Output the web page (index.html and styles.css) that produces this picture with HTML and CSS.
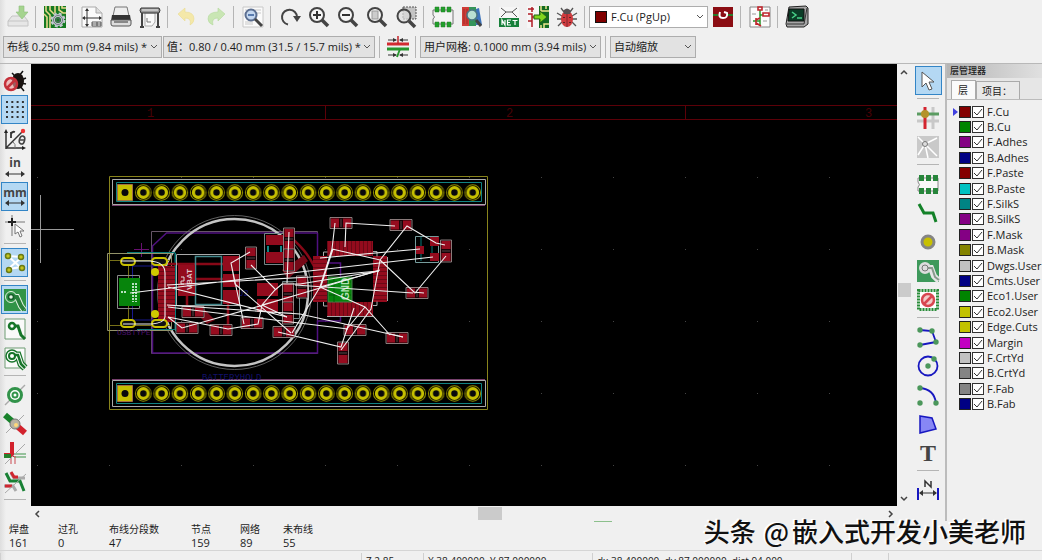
FILE: index.html
```html
<!DOCTYPE html>
<html lang="zh-CN">
<head>
<meta charset="utf-8">
<title>PCB</title>
<link rel="stylesheet" href="styles.css">
</head>
<body>
<header class="head">
  <div class="bar">
    <button class="tool" aria-label="保存"><svg viewBox="0 0 22 22"><path d="M1 15l4-5h12l4 5v5H1z" fill="#e6e6e6" stroke="#c4c4c4"/><path d="M1 15h20" stroke="#c4c4c4"/><path d="M12 0h5v6h4l-6 7-6-7h3z" fill="#a5d48f" stroke="#8dbd7c" stroke-width=".6"/></svg></button>
    <i class="sep"></i>
    <button class="tool" aria-label="电路板设置"><svg viewBox="0 0 22 22"><path d="M0 0h22v22H0z" fill="#157a22"/><path d="M2 0v5l4 4v13M6 0v4l4 4M11 0v7M15 0v4l4 3h3M0 8l3 3v11M18 0v2h4" fill="none" stroke="#e5d889" stroke-width="1.6"/><circle cx="14" cy="14" r="4.500" fill="none" stroke="#c3c9d0" stroke-width="3"/><circle cx="14" cy="14" r="6.500" fill="none" stroke="#c3c9d0" stroke-width="2" stroke-dasharray="3 2.100"/><circle cx="14" cy="14" r="4.500" fill="none" stroke="#59616b" stroke-width=".8"/><circle cx="14" cy="14" r="2" fill="#157a22" stroke="#59616b"/></svg></button>
    <i class="sep"></i>
    <button class="tool" aria-label="页面设置"><svg viewBox="0 0 22 22"><path d="M1 1h14l6 6v14H1z" fill="#fafafa" stroke="#aaa"/><path d="M15 1v6h6" fill="#ddd" stroke="#aaa"/><path d="M6 3v17M2 12h18" stroke="#333"/><path d="M4 5l2-3 2 3zM4 18l2 3 2-3zM4 10l-3 2 3 2zM18 10l3 2-3 2z" fill="#333"/><path d="M11 16h9v4h-9zM11 18h9M16 16v4" fill="none" stroke="#333" stroke-width=".8"/></svg></button>
    <button class="tool" aria-label="打印"><svg viewBox="0 0 22 22"><path d="M5 1h12l2 9H3z" fill="#eee" stroke="#777"/><path d="M2 9h18l1 6H1z" fill="#333"/><path d="M1 14h20v4q0 2-2 2H3q-2 0-2-2z" fill="#ddd" stroke="#555"/><path d="M4 16h14" stroke="#888" stroke-width="2"/></svg></button>
    <button class="tool" aria-label="绘图"><svg viewBox="0 0 22 22"><path d="M6 7h10v9l-3 4H6z" fill="#fafafa" stroke="#aaa"/><path d="M2 2h18q2 2 0 5H2q-2-3 0-5z" fill="#999" stroke="#333"/><path d="M3 4h16" stroke="#eee"/><path d="M3 7v14M19 7v14M1 21h4M17 21h4" stroke="#444" stroke-width="2"/><path d="M8 12v4h4" fill="none" stroke="#777"/></svg></button>
    <i class="sep"></i>
    <button class="tool" aria-label="撤销"><svg viewBox="0 0 22 22"><path d="M2 8l7-6v4q9 0 9 7 0 4-4 6 2-7-5-7v3z" fill="#f4e8a9" stroke="#eadb92" stroke-width=".6"/></svg></button>
    <button class="tool" aria-label="重做"><svg viewBox="0 0 22 22"><path d="M20 8l-7-6v4Q3 6 3 13q0 4 5 6-2-7 5-7v3z" fill="#c9e6b4" stroke="#b4d99c" stroke-width=".6"/></svg></button>
    <i class="sep"></i>
    <button class="tool" aria-label="查找"><svg viewBox="0 0 22 22"><path d="M1 1h20v20H1z" fill="#fafafa" stroke="#c8c8c8"/><path d="M3 4h16M3 7h16M3 16h8M3 18h8" stroke="#c8c8c8"/><circle cx="9" cy="9" r="5.500" fill="#c4d7ef" stroke="#5c6f91" stroke-width="2"/><path d="M6 9h6" stroke="#587aae" stroke-width="2"/><path d="M13 13l7 7" stroke="#444" stroke-width="3"/></svg></button>
    <i class="sep"></i>
    <button class="tool" aria-label="刷新"><svg viewBox="0 0 22 22"><path d="M9 18.500A7.500 7.500 0 1 1 18 11" fill="none" stroke="#444" stroke-width="2"/><path d="M14 10h8l-4 6z" fill="#444"/></svg></button>
    <button class="tool" aria-label="放大"><svg viewBox="0 0 22 22"><circle cx="9" cy="9" r="7" fill="#f6f6f6" stroke="#444" stroke-width="2"/><path d="M14 14l6 6" stroke="#444" stroke-width="3.500"/><path d="M5 9h8M9 5v8" stroke="#333" stroke-width="2"/></svg></button>
    <button class="tool" aria-label="缩小"><svg viewBox="0 0 22 22"><circle cx="9" cy="9" r="7" fill="#f6f6f6" stroke="#444" stroke-width="2"/><path d="M14 14l6 6" stroke="#444" stroke-width="3.500"/><path d="M5 9h8" stroke="#333" stroke-width="2"/></svg></button>
    <button class="tool" aria-label="适合窗口"><svg viewBox="0 0 22 22"><circle cx="9" cy="9" r="7" fill="#f6f6f6" stroke="#444" stroke-width="2"/><path d="M14 14l6 6" stroke="#444" stroke-width="3.500"/><path d="M6 5h6v8H6z" fill="#ccc" stroke="#999"/></svg></button>
    <button class="tool" aria-label="缩放选区"><svg viewBox="0 0 22 22"><path d="M8 1h13v12H8z" fill="#c4c4c4" stroke="#555" stroke-dasharray="2 1"/><circle cx="9" cy="10" r="6.500" fill="#ddd" fill-opacity=".7" stroke="#444" stroke-width="2"/><path d="M14 15l6 6" stroke="#444" stroke-width="3.500"/></svg></button>
    <i class="sep"></i>
    <button class="tool" aria-label="封装编辑器"><svg viewBox="0 0 22 22"><path d="M1 4h20v14H1v-5q3-2 0-4z" fill="#f4f4f4" stroke="#777"/><path d="M3 1h4v5H3zM9 1h4v5H9zM15 1h4v5h-4zM3 16h4v5H3zM9 16h4v5H9zM15 16h4v5h-4z" fill="#20a02a" stroke="#247a2b" stroke-width=".5"/></svg></button>
    <button class="tool" aria-label="封装浏览"><svg viewBox="0 0 22 22"><path d="M1 1h7v19H1z" fill="#cf3d37"/><path d="M3 3v15M6 3v15" stroke="#a52a28"/><path d="M8 1h7v19H8z" fill="#34945a"/><path d="M15 3l3-1 3 17h-6z" fill="#3d74bb"/><circle cx="11" cy="9" r="5" fill="#b9e0d2" stroke="#4c7683" stroke-width="1.500"/><path d="M15 14l5 6" stroke="#444" stroke-width="3"/></svg></button>
    <i class="sep"></i>
    <button class="tool" aria-label="网络表"><svg viewBox="0 0 22 22"><path d="M1 1h20v11H1z" fill="#f6f6f6"/><path d="M3 2l5 4h6l5-4M3 11l5-5M19 11l-5-5" fill="none" stroke="#555"/><path d="M1 12h20v9H1z" fill="#17803a"/><path d="M4 19v-5l3 5v-5M13 14H9.500v5H13M9.500 16.500H12M14.500 14.500h5M17 14.500V19" fill="none" stroke="#fff" stroke-width="1.200"/></svg></button>
    <button class="tool" aria-label="从原理图更新"><svg viewBox="0 0 22 22"><path d="M0 0h22v22H0z" fill="#f6f6f6"/><path d="M12 0h10v22H12z" fill="#136b22"/><path d="M14 0v5h8M17 22v-4h5M19 0v3M14 22v-3" fill="none" stroke="#eee78f" stroke-width="1.500"/><path d="M5 1v5M1 8h4v7H1M5 15v6M1 3h6M5 11h5" fill="none" stroke="#b01c26" stroke-width="1.500"/><path d="M7 9h6V5l7 6-7 6v-4H7z" fill="#80d51f" stroke="#246217"/></svg></button>
    <button class="tool" aria-label="设计规则检查"><svg viewBox="0 0 22 22"><path d="M5 2l3 4M17 2l-3 4M1 7l5 3M21 7l-5 3M1 13h5M21 13h-5M2 20l4-4M20 20l-4-4" stroke="#555" stroke-width="1.300"/><ellipse cx="11" cy="13" rx="6" ry="8" fill="#cf3b3e"/><path d="M7 5q4-5 8 0l-1 3H8z" fill="#565052"/><path d="M11 8v13" stroke="#84272e"/><path d="M8 11v1M14 11v1M8 16v1M14 16v1" stroke="#5e2528" stroke-width="2"/></svg></button>
    <i class="sep"></i>
    <span class="layerpick"><i class="chip"></i><select class="combo white" aria-label="当前层"><option>F.Cu (PgUp)</option></select></span>
    <button class="tool" aria-label="层对"><svg viewBox="0 0 22 22"><path d="M1 1h20v20H1z" fill="#8b0d13"/><path d="M1 9h20" stroke="#287929" stroke-width="2"/><circle cx="11" cy="9" r="5" fill="#8b0d13"/><path d="M8 6q-2 6 3 6t4-5l-3-1" fill="none" stroke="#fff" stroke-width="2"/></svg></button>
    <i class="sep"></i>
    <button class="tool" aria-label="原理图"><svg viewBox="0 0 22 22"><path d="M1 1h20v20H1z" fill="#fbfbfb" stroke="#888"/><path d="M11 4v15M11 9h3M4 15h7" stroke="#27942a" stroke-width="1.500"/><path d="M9 1h4v3H9zM14 7h6v3h-6zM7 12v7M7 14l4-2M7 17l5 3" fill="none" stroke="#c0252c" stroke-width="1.600"/><path d="M3 8h4M14 15h4M16 4h3" stroke="#999"/></svg></button>
    <i class="sep"></i>
    <button class="tool" aria-label="脚本控制台"><svg viewBox="0 0 22 22"><path d="M3 1l17-1 2 2v16l-4 3H1l-1-3z" fill="#a6a6a6" stroke="#222"/><path d="M3 3h15v12H2z" fill="#0b3c27" stroke="#111"/><path d="M6 6l4 3-4 3M11 12h5" fill="none" stroke="#47d087" stroke-width="1.500"/><path d="M1 18h17l3-16" fill="none" stroke="#333"/></svg></button>
  </div>
  <div class="bar second">
    <select class="combo w1" aria-label="布线宽度"><option>布线 0.250 mm (9.84 mils) *</option></select>
    <select class="combo w2" aria-label="过孔尺寸"><option>值：0.80 / 0.40 mm (31.5 / 15.7 mils) *</option></select>
    <i class="sep"></i>
    <button class="tool" aria-label="自动布线宽度"><svg viewBox="0 0 22 22"><path d="M0 8h22" stroke="#d22b31" stroke-width="3"/><path d="M0 13h22" stroke="#27962e" stroke-width="3"/><path d="M11 0v8" stroke="#c3252b" stroke-width="1.500"/><path d="M13 13l-3 8" stroke="#27962e" stroke-width="2"/><path d="M1 4h8M13 4h8M1 19h8M13 19h8" stroke="#333"/><path d="M6 2l4 2-4 2zM16 2l-4 2 4 2zM6 17l4 2-4 2zM16 17l-4 2 4 2z" fill="#333"/></svg></button>
    <i class="sep"></i>
    <select class="combo w3" aria-label="网格"><option>用户网格: 0.1000 mm (3.94 mils)</option></select>
    <i class="sep"></i>
    <select class="combo w4" aria-label="缩放"><option>自动缩放</option></select>
  </div>
</header>

<main class="work">
  <nav class="side">
    <button class="tool" aria-label="关闭检查"><svg viewBox="0 0 22 22"><path d="M8 3l4 4M19 1l-4 5M7 9h4M22 8l-5 2M22 14l-5-1M20 21l-4-5" stroke="#111" stroke-width="1.500"/><ellipse cx="14" cy="11" rx="6" ry="8" fill="#17110f"/><circle cx="7" cy="14" r="6" fill="#e99" fill-opacity=".6" stroke="#c5303a" stroke-width="2.500"/><path d="M3 18l8-8" stroke="#c5303a" stroke-width="2.500"/></svg></button>
    <button class="tool on" aria-label="显示网格"><svg viewBox="0 0 22 22"><path d="M2 3h18M2 8h18M2 13h18M2 18h18" stroke="#333" stroke-width="2" stroke-dasharray="2 3.300"/></svg></button>
    <button class="tool" aria-label="极坐标"><svg viewBox="0 0 22 22"><path d="M2 21V3M2 20h18M2 20L18 4" fill="none" stroke="#333" stroke-width="1.500"/><path d="M0 5l2-4 2 4zM18 18l4 2-4 2z" fill="#222"/><circle cx="19" cy="3" r="2.200" fill="#e33"/><path d="M7 10V4M7 6q1-3 4-2" fill="none" stroke="#333" stroke-width="1.800"/><path d="M9 14q3 2 2 6" fill="none" stroke="#777"/><ellipse cx="18" cy="12" rx="2.600" ry="4" fill="none" stroke="#444" stroke-width="1.600" transform="rotate(15 18 12)"/><path d="M16 12h4" stroke="#444" stroke-width="1.500"/></svg></button>
    <button class="tool" aria-label="英寸"><svg viewBox="0 0 22 22"><text x="11" y="10" class="unit">in</text><path d="M3 17h16" stroke="#333"/><path d="M5 14l-4 3 4 3zM17 14l4 3-4 3z" fill="#333"/></svg></button>
    <button class="tool on" aria-label="毫米"><svg viewBox="0 0 22 22"><text x="11" y="11" class="unit">mm</text><path d="M3 17h16" stroke="#333"/><path d="M5 14l-4 3 4 3zM17 14l4 3-4 3z" fill="#333"/></svg></button>
    <button class="tool" aria-label="光标形状"><svg viewBox="0 0 22 22"><path d="M1 7h20M8 0v21" stroke="#777"/><path d="M4 7h8M8 3v8" stroke="#222" stroke-width="2"/><path d="M11 9v10l3-2 2 5 2-1-2-5h4z" fill="#fff" stroke="#777"/></svg></button>
    <i class="sep"></i>
    <button class="tool on" aria-label="显示飞线"><svg viewBox="0 0 22 22"><path d="M4 4l14 1-14 12 14-2M4 4l12 11" fill="none" stroke="#fff" stroke-width="2"/><g fill="#c4c51f" stroke="#697a16" stroke-width="1.500"><circle cx="4" cy="4" r="2.500"/><circle cx="17" cy="5" r="2.500"/><circle cx="5" cy="18" r="2.500"/><circle cx="18" cy="16" r="2.500"/></g></svg></button>
    <i class="sep"></i>
    <button class="tool on" aria-label="填充区域"><svg viewBox="0 0 22 22"><path d="M0 0h22v22H0z" fill="#319447"/><path d="M8 8h5l4 9 3 4" fill="none" stroke="#e6f3e5" stroke-width="6"/><circle cx="7" cy="8" r="5.500" fill="#319447" stroke="#e6f3e5"/><path d="M8 8h5l4 9 3 4" fill="none" stroke="#287f3b" stroke-width="4"/><circle cx="7" cy="8" r="2.500" fill="#e6f3e5" stroke="#17602a" stroke-width="1.500"/></svg></button>
    <button class="tool" aria-label="区域轮廓"><svg viewBox="0 0 22 22"><path d="M1 1h20v20H1z" fill="#fafafa" stroke="#6d9b73"/><path d="M9 8h5l3 9 4 4" fill="none" stroke="#17752a" stroke-width="3"/><circle cx="8" cy="8" r="3" fill="#fff" stroke="#17752a" stroke-width="2.500"/></svg></button>
    <button class="tool" aria-label="隐藏填充"><svg viewBox="0 0 22 22"><path d="M1 1h20v20H1z" fill="#fafafa" stroke="#6d9b73"/><path d="M8 8h6l3 9 4 4" fill="none" stroke="#17752a" stroke-width="7"/><circle cx="8" cy="9" r="6" fill="#fff" stroke="#17752a" stroke-width="1.500"/><path d="M8 8h6l3 9 4 4" fill="none" stroke="#fff" stroke-width="4.500"/><path d="M9 8h5l3 9 4 4" fill="none" stroke="#17752a" stroke-width="2.500"/><circle cx="8" cy="9" r="3" fill="#fff" stroke="#17752a" stroke-width="2"/></svg></button>
    <i class="sep"></i>
    <button class="tool" aria-label="焊盘草图"><svg viewBox="0 0 22 22"><path d="M1 21L21 1" stroke="#aaa" stroke-width="1.500"/><circle cx="11" cy="11" r="6.500" fill="#fff" stroke="#32934a" stroke-width="3"/><circle cx="11" cy="11" r="2.500" fill="none" stroke="#32934a" stroke-width="2"/></svg></button>
    <button class="tool" aria-label="过孔草图"><svg viewBox="0 0 22 22"><path d="M2 20L20 2" stroke="#aaa"/><path d="M1 2l8 7" stroke="#18822b" stroke-width="6"/><path d="M13 13l8 7" stroke="#d2222d" stroke-width="6"/><circle cx="11" cy="11" r="5" fill="#b9b3a2" stroke="#777"/><circle cx="12" cy="12" r="2" fill="#ffd978"/></svg></button>
    <button class="tool" aria-label="布线草图"><svg viewBox="0 0 22 22"><path d="M8 0v12M0 13h10" stroke="#d2222d" stroke-width="4"/><path d="M10 12h12M10 15h12" stroke="#3d9348"/><path d="M7 14v8M11 14v8" stroke="#ca4a50"/><path d="M0 14h7" stroke="#27822e" stroke-width="4"/><path d="M1 22L21 2" stroke="#aaa"/></svg></button>
    <button class="tool" aria-label="高对比度"><svg viewBox="0 0 22 22"><path d="M7 2l3 5h11M0 15h9l3 5" fill="none" stroke="#aaa" stroke-width="3"/><path d="M7 1l3 5h4M1 15h7" fill="none" stroke="#d02730" stroke-width="3"/><path d="M2 2l4 8h10l4 10" fill="none" stroke="#198135" stroke-width="3"/><path d="M1 22L22 3" stroke="#aaa"/></svg></button>
    <i class="sep"></i>
  </nav>

  <section class="view" aria-label="电路板">
    <svg class="board" width="100%" height="100%">
      <defs>
        <pattern id="dots" x="37" y="33" width="72" height="72" patternUnits="userSpaceOnUse"><path d="M0 0h1v1H0z" fill="#444"/></pattern>
        <pattern id="pins" x="134.200" y="0" width="18.300" height="201" patternUnits="userSpaceOnUse">
          <g id="pin"><circle cx="9.150" cy="192.500" r="7.800" fill="none" stroke="#969200"/><circle cx="9.150" cy="192.500" r="4.800" fill="#08080c" stroke="#c5bf00" stroke-width="3.200"/></g>
        </pattern>
        <pattern id="lead" width="4" height="20" patternUnits="userSpaceOnUse"><path d="M0 0h3v20H0z" fill="#930b1d"/><path d="M3 0h1v20H3z" fill="#6a0815"/></pattern>
        <pattern id="leadv" width="20" height="4" patternUnits="userSpaceOnUse"><path d="M0 0h20v3H0z" fill="#930b1d"/><path d="M0 3h20v1H0z" fill="#6a0815"/></pattern>
        <g id="h"><path d="M-11-5.500h22v11h-22z" fill="#190307" stroke="#a99" stroke-width=".8"/><path d="M-10-4.500h8v9h-8zM2-4.500h8v9H2z" fill="#960c1f"/><path d="M0-4v8" stroke="#777" stroke-width=".6"/></g>
        <g id="v"><path d="M-5.500-11h11v22h-11z" fill="#190307" stroke="#a99" stroke-width=".8"/><path d="M-4.500-10h9v8h-9zM-4.500 2h9v8h-9z" fill="#960c1f"/><path d="M-4 0h8" stroke="#777" stroke-width=".6"/></g>
      </defs>
      <g transform="translate(-31 -64)">
        <path d="M31 64h2000v1500H31z" fill="url(#dots)"/>
        <path d="M31 105.500h2000M31 119.500h2000M325.500 105v14M685.500 105v14" fill="none" stroke="#5c0008"/>
        <g class="frame-no"><text x="147" y="117">1</text><text x="506" y="117">2</text><text x="865" y="117">3</text></g>
        <path d="M40.500 195v68M31 229.500h43" stroke="#999"/>

        <g fill="none">
          <path d="M109.500 176.500h378v233h-378z" stroke="#89841c"/>
          <path d="M112.500 179.500h373v25h-373zM112.500 380.500h373v26h-373z" stroke="#aaa"/>
          <path d="M112 205.500h373M112 379.500h373" stroke="#77406d"/>
          <path d="M116.500 182.500h365v19h-365zM116.500 383.500h365v20h-365z" stroke="#118383"/>
        </g>
        <path d="M134.200 183h347.700v19H134.200z" fill="url(#pins)"/>
        <path d="M134.200 183h347.700v19H134.200z" fill="url(#pins)" transform="translate(0 201)"/>
        <g fill="#c5bf00" stroke="#a16f45"><path d="M117.500 184.500h15v16h-15zM117.500 385.500h15v16h-15z"/></g>
        <circle cx="125" cy="192.500" r="3.500" fill="#08080c"/><circle cx="125" cy="393.500" r="3.500" fill="#08080c"/>

        <g fill="none">
          <path d="M151.500 231.500h166v122h-166z" stroke="#665567"/>
          <path d="M317.500 233v30h23v58h-23v32h-165V246l14-13h151" stroke="#501080" stroke-width="1.500"/>
          <path d="M134 249.500h15M141.500 243v14" stroke="#681070"/>
          <circle cx="234.500" cy="292.500" r="77" stroke="#777" stroke-width=".8"/>
          <circle cx="234.500" cy="292.500" r="73.500" stroke="#c4c4c4" stroke-width="2.500"/>
          <path d="M107.500 253.500h64v77h-64z" stroke="#929269"/>
          <path d="M127 252.500h48v77h-38M175.500 253v78" stroke="#087b7b"/>
          <path d="M110 260.500h60M110 325.500h60M128.500 261v64" stroke="#777018"/>
          <path d="M132.500 266v54h29v-54z" stroke="#18188c"/>
          <path d="M117.500 275.500h22v33h-22z" stroke="#888"/>
        </g>
        <path d="M119 278h21v28h-21z" fill="#07840c"/>
        <path d="M121 292h6M133 283v19M136 283v19" stroke="#b8e1c0" stroke-width="2" stroke-dasharray="2 1"/>
        <path d="M158 266h17v56h-17z" fill="url(#leadv)"/>
        <g fill="#111" stroke="#c9c000" stroke-width="2"><rect x="121" y="258" width="14" height="7" rx="3.500"/><rect x="152" y="258" width="15" height="7" rx="3.500"/><rect x="121" y="320" width="14" height="7" rx="3.500"/><rect x="152" y="320" width="15" height="7" rx="3.500"/></g>
        <g fill="#d0c900"><circle cx="155" cy="272" r="4"/><circle cx="155" cy="314" r="4"/></g>
        <text x="117" y="335" class="silk purple">USBTYPE</text>
        <text x="202" y="380" class="silk">BATTERYHOLD</text>
        <text x="238" y="296" class="silk">U2</text>

        <g fill="none">
          <path d="M168 264h56M194 279h30M187 294v16M228 303v22M289 236q25 20 30 45" stroke="#870817" stroke-width="2.500"/>
          <path d="M176.500 254.500h63v51h-63z" stroke="#a9a9a9"/>
          <path d="M195.500 256.500h26v48h-26z" stroke="#43888c" stroke-width="1.500"/>
        </g>
        <g fill="#930b1d"><path d="M178 265h17v31h-17zM223 256h16v15h-16zM223 274h16v13h-16zM223 290h16v14h-16zM266 235h17v10h-17zM266 252h17v11h-17zM257 283h21v13h-21zM257 299h21v13h-21z"/><path d="M201 306l14 14-8 4-12-12zM282 270l22-15 4 6-20 18z" fill="#760917"/></g>
        <text class="label" transform="translate(192 290) rotate(-90)">VBAT</text>
        <path d="M181 277h3v4h-3v3h3" fill="none" stroke="#ddd"/>
        <path d="M264.500 233.500h20v31h-20zM282.500 281.500h17v37h-17z" fill="none" stroke="#748789"/>
        <path d="M268 246v6M281 246v6" stroke="#118787" stroke-width="2"/>
        <use href="#v" x="289" y="239"/><use href="#v" x="289" y="260"/><use href="#v" x="251" y="258"/><use href="#v" x="288" y="294"/><use href="#v" x="288" y="313"/><use href="#v" x="302" y="287"/>
        <use href="#h" x="193" y="312"/><use href="#h" x="187" y="328"/><use href="#h" x="221" y="330"/><use href="#h" x="252" y="323"/><use href="#h" x="284" y="332"/><use href="#h" x="341" y="223"/><use href="#h" x="401" y="225"/><use href="#h" x="417" y="293"/><use href="#h" x="355" y="330"/><use href="#h" x="397" y="338"/>
        <use href="#v" x="446" y="251"/><use href="#v" x="343" y="353"/>
        <path d="M415.500 236.500h23v26h-23z" fill="none" stroke="#769c9c"/><path d="M421 237v24M432 237v24" stroke="#087878"/>
        <path d="M416 246h8v8h-8zM430 237h9v9h-9zM430 253h9v8h-9z" fill="#930b1d"/>
        <path d="M327 241h46v15h-46zM327 302h46v14h-46z" fill="url(#lead)"/>
        <path d="M313 256h14v46h-14zM373 256h14v46h-14z" fill="url(#leadv)"/>
        <path d="M323.500 256v-4h4M373 251.500h4v5M323.500 302v4h4M373 305.500h4v-4M387.500 257v44M327 316.500h46" fill="none" stroke="#aaa"/>
        <path d="M328 277h24v25h-24z" fill="#07840c" stroke="#477c4a"/>
        <path d="M329 282h22M329 295h22M334 278v24" stroke="#055c09"/>
        <text class="label gnd" transform="translate(349 300) rotate(-90)">GND</text>

        <g class="rats">
          <path d="M130 293L300 272 433 257M167 285L310 277 379 271M320 258L420 249M168 287L287 317M295 285L413 293M167 305L300 314 403 337M168 307L348 329"/>
          <path d="M168 317L182 328 260 306 380 270M168 317L228 329 258 324 262 305 275 290 282 284H300L379 271M250 252L231 263 244 324M231 263L235 284 291 333M251 265L275 289M289 232L287 283M278 332L341 347 354 308M262 305L287 317M262 305L300 294"/>
          <path d="M292 333L320 287 332 249 335 223M345 247L346 223 395 226M332 249L380 260 407 226 436 243 445 245M380 260L415 293 446 256M380 260L371 309 341 350M320 287L365 307 390 335M320 287L378 271M333 249L321 286M365 307L346 330M413 292L424 293M390 334L403 337"/>
          <path d="M121 261h29q15 1 15 12v44q-1 6-13 7h-29"/>
        </g>
      </g>
    </svg>
  </section>

  <div class="vscroll"><svg class="arrow" viewBox="0 0 8 8"><path d="M1 6l3-3 3 3"/></svg><i class="thumb"></i><svg class="arrow" viewBox="0 0 8 8"><path d="M1 2l3 3 3-3"/></svg></div>
  <div class="hscroll"><svg class="arrow" viewBox="0 0 8 8"><path d="M5 1L2 4l3 3"/></svg><i class="thumb"></i><svg class="arrow" viewBox="0 0 8 8"><path d="M3 1l3 3-3 3"/></svg></div>

  <nav class="side right">
    <button class="tool on" aria-label="选择"><svg viewBox="0 0 22 22"><path d="M5 2v15l4-4 3 7 3-1-3-7h5z" fill="#fff" stroke="#555"/></svg></button>
    <i class="sep"></i>
    <button class="tool" aria-label="高亮网络"><svg viewBox="0 0 22 22"><path d="M0 14h22M16 0v22" stroke="#c8c8c8" stroke-width="3"/><path d="M0 7h22" stroke="#5b9c62" stroke-width="3"/><path d="M8 0v22" stroke="#d3252f" stroke-width="3"/><circle cx="8" cy="7" r="4" fill="#b4932a"/></svg></button>
    <button class="tool" aria-label="局部飞线"><svg viewBox="0 0 22 22"><path d="M0 0h22v22H0z" fill="#c9c9c9"/><path d="M8 8L1 1M8 8L20 2M8 8L1 19M8 8l12 12M8 8l3 14" stroke="#fff" stroke-width="1.500"/><circle cx="8" cy="8" r="2.500" fill="#ddd" stroke="#777"/></svg></button>
    <i class="sep"></i>
    <button class="tool" aria-label="添加封装"><svg viewBox="0 0 22 22"><path d="M1 5h20v13H1v-4q3-2 0-5z" fill="#f8f8f8" stroke="#888"/><path d="M2 2h5v6H2zM9 2h5v6H9zM16 2h5v6h-5zM2 15h5v6H2zM9 15h5v6H9zM16 15h5v6h-5z" fill="#27853b"/></svg></button>
    <button class="tool" aria-label="布线"><svg viewBox="0 0 22 22"><path d="M2 2l5 9h9l3 9" fill="none" stroke="#148229" stroke-width="3"/></svg></button>
    <button class="tool" aria-label="添加过孔"><svg viewBox="0 0 22 22"><circle cx="11" cy="11" r="6" fill="#c8c000" stroke="#858585" stroke-width="3"/></svg></button>
    <button class="tool" aria-label="添加区域"><svg viewBox="0 0 22 22"><path d="M0 0h22v22H0z" fill="#3e995b"/><path d="M8 8h6l3 8 5 5" fill="none" stroke="#e6e6e6" stroke-width="6"/><circle cx="8" cy="8" r="4" fill="#3e995b" stroke="#ddd" stroke-width="4"/><path d="M11 8h4l3 9 4 3" fill="none" stroke="#889a8c" stroke-width="2"/><circle cx="8" cy="8" r="3" fill="#ddd" stroke="#777"/></svg></button>
    <button class="tool" aria-label="禁止布线区"><svg viewBox="0 0 22 22"><path d="M1.500 1.500h19v19h-19z" fill="#fff" stroke="#288c38" stroke-width="3" stroke-dasharray="2 1"/><circle cx="11" cy="11" r="6" fill="#f2caca" stroke="#d84650" stroke-width="2.500"/><path d="M7 15l8-8" stroke="#d84650" stroke-width="2.500"/></svg></button>
    <i class="sep"></i>
    <button class="tool" aria-label="绘制线"><svg viewBox="0 0 22 22"><path d="M3 4l12 1 4 11-16 3" fill="none" stroke="#1717c0" stroke-width="1.800"/><g fill="#4b975b"><circle cx="3" cy="4" r="2.700"/><circle cx="15" cy="5" r="2.700"/><circle cx="19" cy="16" r="2.700"/><circle cx="3" cy="19" r="2.700"/></g></svg></button>
    <button class="tool" aria-label="绘制圆"><svg viewBox="0 0 22 22"><circle cx="11" cy="11" r="9.500" fill="none" stroke="#1717c0" stroke-width="1.800"/><g fill="#4b975b"><circle cx="11" cy="11" r="2.700"/><circle cx="17" cy="4" r="2.700"/></g></svg></button>
    <button class="tool" aria-label="绘制圆弧"><svg viewBox="0 0 22 22"><path d="M3 4q14 1 16 15" fill="none" stroke="#1717c0" stroke-width="1.800"/><g fill="#4b975b"><circle cx="3" cy="4" r="2.700"/><circle cx="19" cy="19" r="2.700"/><circle cx="3" cy="19" r="2.700"/></g></svg></button>
    <button class="tool" aria-label="绘制多边形"><svg viewBox="0 0 22 22"><path d="M3 3l12 2 4 11-16 4z" fill="#8787f5" stroke="#1717c0" stroke-width="1.500"/></svg></button>
    <button class="tool" aria-label="文本"><svg viewBox="0 0 22 22"><text x="11" y="19" class="bigt">T</text></svg></button>
    <i class="sep"></i>
    <button class="tool" aria-label="尺寸标注"><svg viewBox="0 0 22 22"><path d="M1 9v12M21 9v12" stroke="#1717c0" stroke-width="2"/><path d="M3 14h16" stroke="#333"/><path d="M6 11l-4 3 4 3zM16 11l4 3-4 3z" fill="#333"/><path d="M8 8V2l6 6V2" fill="none" stroke="#333" stroke-width="1.500"/></svg></button>
  </nav>

  <aside class="panel">
    <h2 class="title">层管理器</h2>
    <div class="tabs"><button class="tab active">层</button><button class="tab">项目：</button></div>
    <ul class="layers">
      <li class="current"><i class="red"></i><label><input type="checkbox" checked>F.Cu</label></li>
      <li><i class="green"></i><label><input type="checkbox" checked>B.Cu</label></li>
      <li><i class="violet"></i><label><input type="checkbox" checked>F.Adhes</label></li>
      <li><i class="navy"></i><label><input type="checkbox" checked>B.Adhes</label></li>
      <li><i class="red"></i><label><input type="checkbox" checked>F.Paste</label></li>
      <li><i class="cyan"></i><label><input type="checkbox" checked>B.Paste</label></li>
      <li><i class="teal"></i><label><input type="checkbox" checked>F.SilkS</label></li>
      <li><i class="violet"></i><label><input type="checkbox" checked>B.SilkS</label></li>
      <li><i class="violet"></i><label><input type="checkbox" checked>F.Mask</label></li>
      <li><i class="olive"></i><label><input type="checkbox" checked>B.Mask</label></li>
      <li><i class="silver"></i><label><input type="checkbox" checked>Dwgs.User</label></li>
      <li><i class="navy"></i><label><input type="checkbox" checked>Cmts.User</label></li>
      <li><i class="green"></i><label><input type="checkbox" checked>Eco1.User</label></li>
      <li><i class="yellow"></i><label><input type="checkbox" checked>Eco2.User</label></li>
      <li><i class="yellow"></i><label><input type="checkbox" checked>Edge.Cuts</label></li>
      <li><i class="magenta"></i><label><input type="checkbox" checked>Margin</label></li>
      <li><i class="silver"></i><label><input type="checkbox" checked>F.CrtYd</label></li>
      <li><i class="gray"></i><label><input type="checkbox" checked>B.CrtYd</label></li>
      <li><i class="gray"></i><label><input type="checkbox" checked>F.Fab</label></li>
      <li><i class="navy"></i><label><input type="checkbox" checked>B.Fab</label></li>
    </ul>
  </aside>
</main>

<footer>
  <dl class="info">
    <div><dt>焊盘</dt><dd>161</dd></div>
    <div><dt>过孔</dt><dd>0</dd></div>
    <div><dt>布线分段数</dt><dd>47</dd></div>
    <div><dt>节点</dt><dd>159</dd></div>
    <div><dt>网络</dt><dd>89</dd></div>
    <div><dt>未布线</dt><dd>55</dd></div>
  </dl>
  <div class="status"><span></span><span>Z 2.85</span><span>X 38.400000&nbsp; Y 87.000000</span><span>dx 38.400000&nbsp; dy 87.000000&nbsp; dist 94.000</span><span></span><span></span></div>
</footer>
<div class="mark">头条 <span>@</span>嵌入式开发小美老师</div>
</body>
</html>
```

FILE: styles.css
```css
* { box-sizing: border-box; }
body {
  margin: 0;
  height: 100vh;
  display: flex;
  flex-direction: column;
  overflow: hidden;
  position: relative;
  background: linear-gradient(90deg, #dedede, #f0f0f0 6px);
  color: #1c1c1c;
  font: 11px/14px "Open Sans", "Noto Sans CJK SC", sans-serif;
}
button { padding: 0; border: 0; background: none; font: inherit; color: inherit; }

.head { height: 64px; flex: none; border-bottom: 1px solid #b8b8b8; }
.bar { display: flex; align-items: center; height: 33px; padding-left: 3px; }
.bar.second { height: 28px; }
.tool { width: 29px; height: 29px; flex: none; display: grid; place-items: center; border: 1px solid transparent; }
.tool svg { width: 22px; height: 22px; display: block; overflow: visible; }
.sep { flex: none; width: 1px; height: 22px; margin: 0 4px 0 3px; background: #b5b5b5; }
.second .sep { margin: 0 4px; }
.second .tool { width: 27px; }

.combo {
  appearance: none;
  height: 22px;
  margin: 0;
  padding: 0 12px 0 3px;
  border: 1px solid #adadad;
  border-radius: 0;
  color: #1c1c1c;
  font: 11px/14px "Open Sans", "Noto Sans CJK SC", sans-serif;
  background: #e2e2e2 url("data:image/svg+xml,%3Csvg xmlns='http://www.w3.org/2000/svg' width='8' height='6'%3E%3Cpath d='M1 1l3 3 3-3' fill='none' stroke='%23555'/%3E%3C/svg%3E") no-repeat right 3px center;
}
.combo.white { background-color: #fff; width: 119px; padding-left: 21px; }
.layerpick { display: flex; position: relative; }
.chip { position: absolute; left: 6px; top: 5px; width: 12px; height: 12px; background: #800000; border: 1px solid #111; }
.w1 { width: 159px; margin-right: 1px; }
.w2 { width: 212px; }
.w3 { width: 181px; }
.w4 { width: 86px; }

.work {
  flex: 1;
  min-height: 0;
  display: grid;
  grid-template-columns: 31px minmax(0, 1fr) 15px 33px 97px;
  grid-template-rows: minmax(0, 1fr) 15px;
}
.side { grid-row: 1 / 3; display: flex; flex-direction: column; align-items: center; padding: 2px 2px 0 0; overflow: hidden; }
.side .sep { width: 22px; height: 1px; margin: 3px 0 4px; }
.side .tool { width: 27px; }
.tool.on { background: #b4d8f3; border-color: #3385c6; }
.right { grid-column: 4; grid-row: 1 / 3; padding-right: 1px; }
.unit { font: bold 12px "Open Sans", sans-serif; text-anchor: middle; fill: #444; }
.bigt { font: bold 24px "Liberation Serif", serif; text-anchor: middle; fill: #444; }

.view { grid-column: 2; grid-row: 1; background: #000; overflow: hidden; }
.board { display: block; }
.frame-no { font: 12px "Liberation Mono", monospace; fill: #4a0005; }
.silk { font: 9px "Liberation Mono", monospace; fill: #11116c; }
.silk.purple { font-size: 8px; fill: #4a106c; }
.label { font: bold 8px "Liberation Sans", sans-serif; fill: #e0c8cc; }
.label.gnd { font-size: 10px; fill: #b0e0b4; }
.rats path { fill: none; stroke: #f0f0f0; stroke-width: 1.1; }

.vscroll { grid-column: 3; grid-row: 1; display: flex; flex-direction: column; align-items: center; justify-content: space-between; padding: 4px 1px 3px 0; }
.hscroll { grid-column: 2; grid-row: 2; display: flex; align-items: center; justify-content: space-between; padding: 0 3px; }
.arrow { width: 8px; height: 8px; }
.arrow path { fill: none; stroke: #444; stroke-width: 1.5; }
.thumb { background: #cbcbcb; }
.vscroll .thumb { width: 13px; height: 14px; margin-top: 8px; }
.hscroll .thumb { width: 24px; height: 13px; margin-left: 52px; }

.panel { grid-column: 5; grid-row: 1 / 3; border-left: 2px solid #bcbcbc; overflow: hidden; }
.title { margin: 0; height: 14px; padding-left: 3px; background: linear-gradient(90deg, #b5b5b5, #e0e0e0); font-size: 9px; line-height: 14px; font-weight: 500; }
.tabs { display: flex; align-items: flex-end; height: 22px; padding-left: 4px; border-bottom: 1px solid #bbb; background: #e6e6e6; }
.tab { height: 18px; padding: 0 5px; width: 44px; border: 1px solid #aaa; border-bottom: 0; background: #e9e9e9; font-size: 10px; text-align: left; white-space: nowrap; }
.tab.active { width: 25px; height: 19px; padding: 0 6px; background: #fafafa; }
.layers { list-style: none; margin: 0; padding: 4px 0 0 12px; height: 312px; display: grid; grid-auto-rows: 1fr; }
.layers li { display: flex; align-items: center; position: relative; white-space: nowrap; }
.layers i { width: 12px; height: 12px; border: 1px solid #222; margin-right: 1px; flex: none; }
.layers label { display: flex; align-items: center; gap: 3px; }
.current::before { content: ""; position: absolute; left: -6px; border: 4px solid transparent; border-right: 0; border-left: 5px solid #4040e0; }
.layers input {
  appearance: none;
  width: 12px;
  height: 12px;
  margin: 0;
  border: 1px solid #333;
  background: #fff url("data:image/svg+xml,%3Csvg xmlns='http://www.w3.org/2000/svg' width='10' height='10'%3E%3Cpath d='M1 5l3 3 5-6' fill='none' stroke='%23333'/%3E%3C/svg%3E") center no-repeat;
}
.red { background: #840000; }
.green { background: #008400; }
.violet { background: #840084; }
.navy { background: #000084; }
.cyan { background: #00c2c2; }
.teal { background: #008484; }
.olive { background: #848400; }
.silver { background: #c2c2c2; }
.yellow { background: #c2c200; }
.magenta { background: #c200c2; }
.gray { background: #848484; }

footer { flex: none; height: 39px; overflow: hidden; font-size: 10px; }
.info {
  margin: 0;
  height: 30px;
  display: grid;
  grid-template-columns: 49px 51px 82px 49px 43px auto;
  padding: 1px 0 0 9px;
  border-bottom: 1px solid #d5d5d5;
  background: linear-gradient(#8cc08c, #8cc08c) 594px 0 / 18px 1px no-repeat;
}
.info dd { margin: 0; font-size: 11px; }
.status { display: grid; grid-template-columns: 361px 62px 169px 259px 37px 1fr; padding-top: 2px; line-height: 16px; }
.status span { padding-left: 4px; border-left: 1px solid #d0d0d0; white-space: nowrap; }
.mark {
  position: absolute;
  right: 16px;
  bottom: 12px;
  font: 500 26px/34px "Noto Sans CJK SC", sans-serif;
  color: #111;
  text-shadow: -2px -1px 0 #fff;
}
.mark span { padding: 0 3px 0 2px; }
```
